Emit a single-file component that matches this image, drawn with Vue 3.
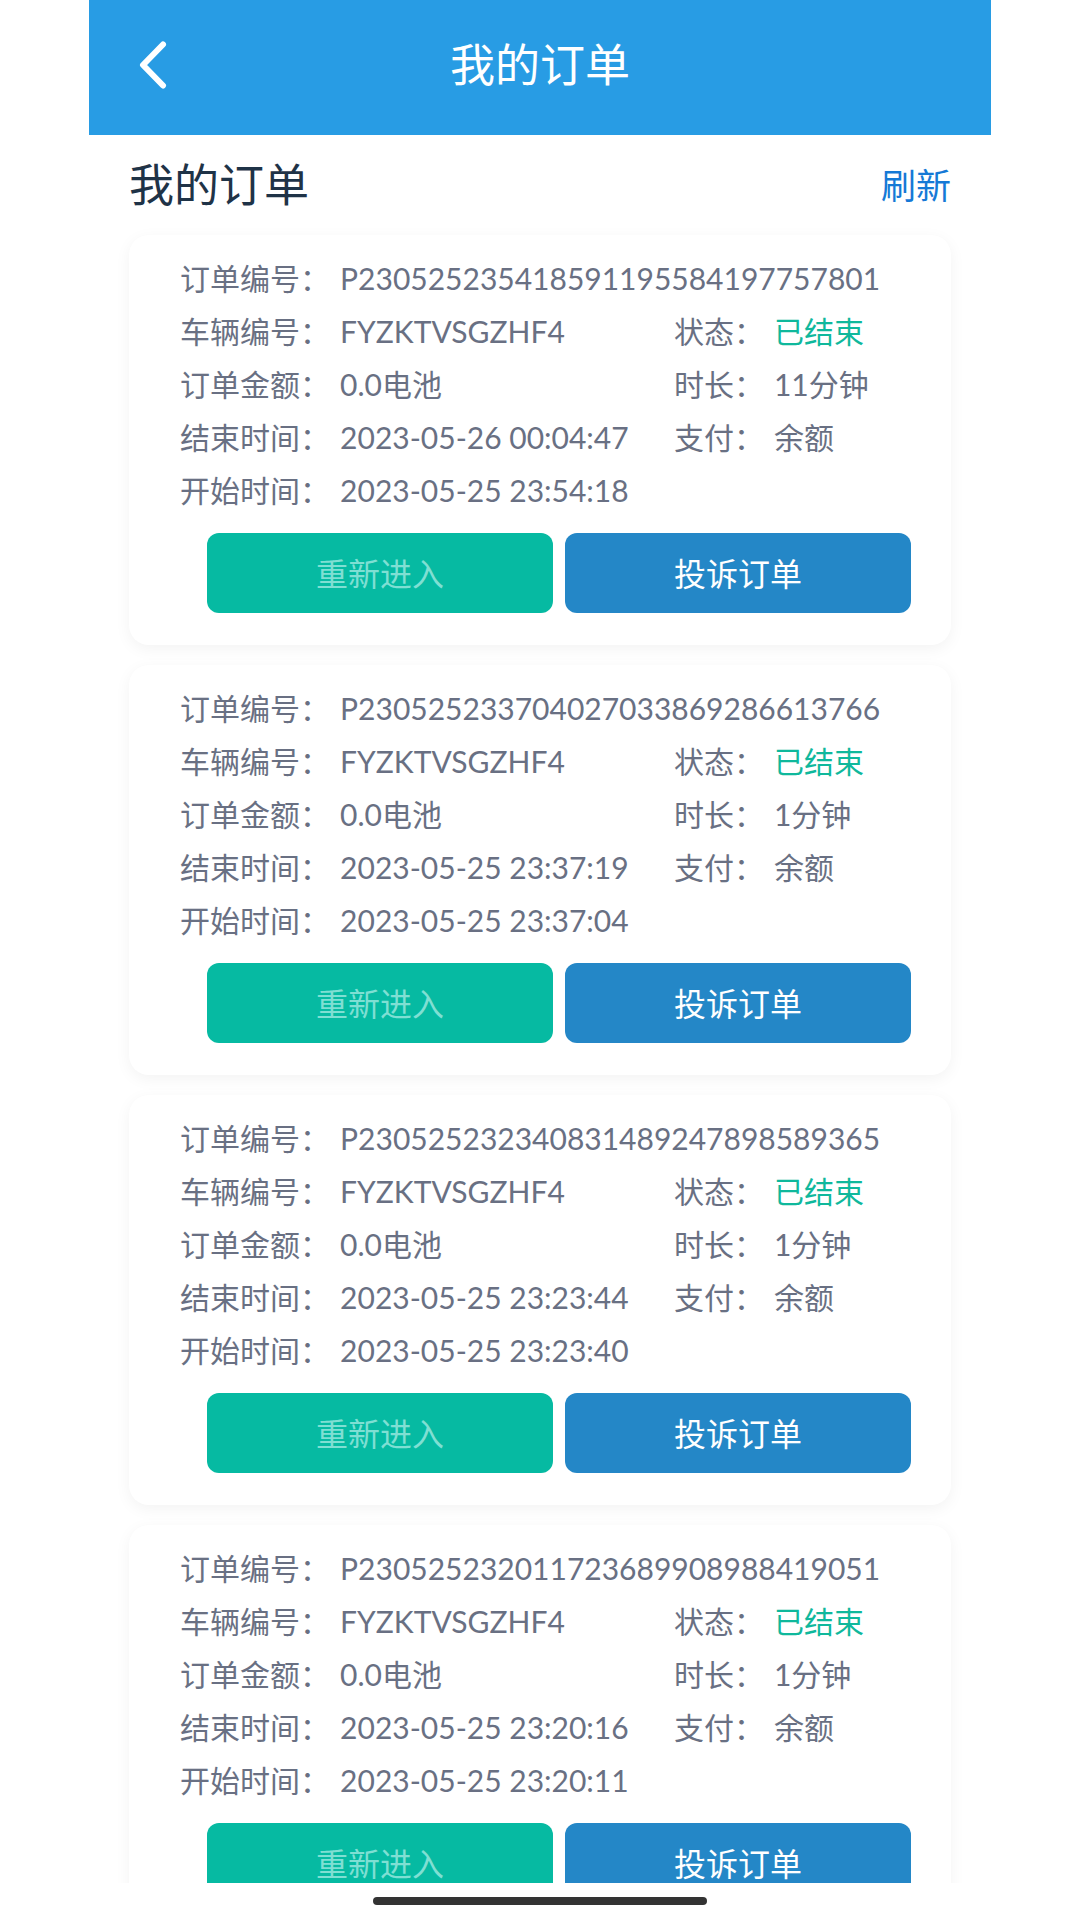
<script setup>
import { ref } from 'vue'

const orders = ref([
  {
    id: 'P230525235418591195584197757801',
    vehicle: 'FYZKTVSGZHF4',
    amount: '0.0电池',
    status: '已结束',
    duration: '11分钟',
    payment: '余额',
    endTime: '2023-05-26 00:04:47',
    startTime: '2023-05-25 23:54:18'
  },
  {
    id: 'P230525233704027033869286613766',
    vehicle: 'FYZKTVSGZHF4',
    amount: '0.0电池',
    status: '已结束',
    duration: '1分钟',
    payment: '余额',
    endTime: '2023-05-25 23:37:19',
    startTime: '2023-05-25 23:37:04'
  },
  {
    id: 'P230525232340831489247898589365',
    vehicle: 'FYZKTVSGZHF4',
    amount: '0.0电池',
    status: '已结束',
    duration: '1分钟',
    payment: '余额',
    endTime: '2023-05-25 23:23:44',
    startTime: '2023-05-25 23:23:40'
  },
  {
    id: 'P230525232011723689908988419051',
    vehicle: 'FYZKTVSGZHF4',
    amount: '0.0电池',
    status: '已结束',
    duration: '1分钟',
    payment: '余额',
    endTime: '2023-05-25 23:20:16',
    startTime: '2023-05-25 23:20:11'
  }
])

// wide fields take the whole row of the card
const fieldsOf = (order) => [
  { label: '订单编号', value: order.id, wide: true },
  { label: '车辆编号', value: order.vehicle },
  { label: '状态', value: order.status, status: true },
  { label: '订单金额', value: order.amount },
  { label: '时长', value: order.duration },
  { label: '结束时间', value: order.endTime },
  { label: '支付', value: order.payment },
  { label: '开始时间', value: order.startTime, wide: true }
]
</script>

<template>
  <div class="screen">
    <header class="navbar">
      <button class="back" type="button" aria-label="返回">
        <svg viewBox="0 0 28 48" width="28" height="48" aria-hidden="true">
          <path d="M24 3.5 4 24 24 44.5" />
        </svg>
      </button>
      <h1 class="navbar-title">我的订单</h1>
    </header>

    <main class="content">
      <div class="section-head">
        <h2 class="section-title">我的订单</h2>
        <a class="refresh" href="#">刷新</a>
      </div>

      <ul class="order-list">
        <li v-for="order in orders" :key="order.id" class="order-card">
          <dl class="fields">
            <div
              v-for="field in fieldsOf(order)"
              :key="field.label"
              :class="['field', { wide: field.wide }]"
            >
              <dt>{{ field.label }}：</dt>
              <dd :class="{ status: field.status }">{{ field.value }}</dd>
            </div>
          </dl>
          <div class="actions">
            <button class="btn btn-enter" type="button" disabled>重新进入</button>
            <button class="btn btn-complain" type="button">投诉订单</button>
          </div>
        </li>
      </ul>
    </main>

    <footer class="home-area">
      <div class="home-bar" />
    </footer>
  </div>
</template>

<style>
body {
  margin: 0;
  background: #fff;
}
</style>

<style scoped>
.screen {
  display: flex;
  flex-direction: column;
  width: 83.5%;
  height: 100vh;
  margin: 0 auto;
  font-family: Lato, 'Noto Sans CJK SC', sans-serif;
  color: #697083;
}

.navbar {
  display: grid;
  grid-template-columns: 78px 1fr 78px;
  align-items: center;
  flex: none;
  height: 135px;
  box-sizing: border-box;
  padding: 0 0 6px;
  background: #289ce4;
  color: #fff;
}

.back {
  display: flex;
  justify-content: flex-end;
  padding: 0;
  border: 0;
  background: none;
  color: inherit;
}

.back svg {
  fill: none;
  stroke: currentColor;
  stroke-width: 6;
  stroke-linecap: round;
  stroke-linejoin: round;
}

.navbar-title,
.section-title {
  margin: 0;
  font-size: 45px;
  font-weight: 400;
  line-height: 60px;
}

.navbar-title {
  text-align: center;
}

.content {
  flex: 1;
  min-height: 0;
  overflow: hidden;
  padding: 0 40px;
}

.section-head {
  display: flex;
  align-items: center;
  justify-content: space-between;
  height: 100px;
}

.section-title {
  color: #1f3347;
}

.refresh {
  font-size: 35px;
  line-height: 54px;
  color: #1579d6;
  text-decoration: none;
}

.order-list {
  display: flex;
  flex-direction: column;
  gap: 20px;
  margin: 0;
  padding: 0;
  list-style: none;
}

.order-card {
  padding: 17px 40px 32px 51px;
  border-radius: 20px;
  background: #fff;
  box-shadow: 0 4px 16px rgba(0, 0, 0, 0.05);
}

.fields {
  display: grid;
  grid-template-columns: 494fr 237fr;
  margin: 0;
  font-size: 30px;
  line-height: 53px;
}

.field {
  display: flex;
  gap: 10px;
  white-space: nowrap;
}

.field.wide {
  grid-column: 1 / -1;
}

.field dd {
  margin: 0;
}

.field .status {
  color: #0fb89c;
}

.actions {
  display: flex;
  gap: 12px;
  margin-top: 16px;
  padding-left: 27px;
}

.btn {
  flex: 1;
  height: 80px;
  padding: 0 0 2px;
  border: 0;
  border-radius: 12px;
  font-family: inherit;
  font-size: 32px;
  color: #fff;
}

.btn-enter {
  background: #06baa2;
  color: #7fdfd3;
}

.btn-complain {
  background: #2487c7;
}

.home-area {
  flex: none;
  height: 37px;
}

.home-bar {
  width: 37%;
  height: 8px;
  margin: 14px auto 0;
  border-radius: 4px;
  background: #333;
}
</style>
